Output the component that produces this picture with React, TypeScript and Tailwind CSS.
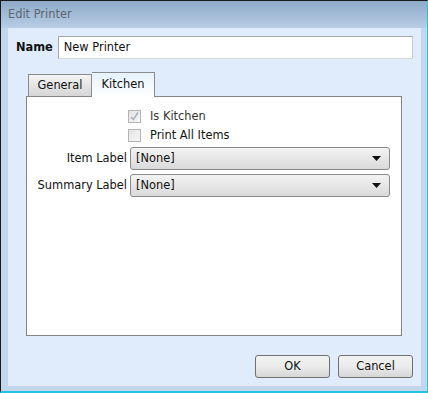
import React from 'react';

const font = { fontFamily: '"DejaVu Sans", Verdana, sans-serif' };

const Check: React.FC<{ checked?: boolean }> = ({ checked }) => (
  <span className="flex h-[13px] w-[13px] items-center justify-center border border-[#b4b4b4] bg-gradient-to-br from-[#e4e4e4] to-[#f6f6f6]">
    {checked && (
      <svg width="11" height="11" viewBox="0 0 11 11">
        <path d="M2 6 L4.3 8.5 L9 1.5" fill="none" stroke="#a8b4c4" strokeWidth="1.6" />
      </svg>
    )}
  </span>
);

const Dropdown: React.FC<{ value: string }> = ({ value }) => (
  <div className="flex h-[23px] flex-1 items-center justify-between rounded-[3px] border border-[#8a8a8a] bg-gradient-to-b from-[#f3f3f3] to-[#dadada] pl-[5px] pr-[8px]">
    <span>{value}</span>
    <svg width="9" height="5" viewBox="0 0 9 5">
      <path d="M0 0 H9 L4.5 5 Z" fill="#111" />
    </svg>
  </div>
);

const Button: React.FC<{ label: string }> = ({ label }) => (
  <button className="h-[23px] w-[75px] rounded-[3px] border border-[#707070] bg-gradient-to-b from-[#f2f2f2] via-[#ebebeb] to-[#d6d6d6] text-[#111]">
    {label}
  </button>
);

export default function App() {
  return (
    <div
      style={font}
      className="flex h-[393px] w-[428px] flex-col border-l border-t border-b-2 border-r border-l-[#1a1a1a] border-t-[#1a1a1a] border-r-[#22c6dc] border-b-[#22c6dc] bg-[#c2d6ee] text-[11.4px] text-[#111]"
    >
      {/* Title bar */}
      <div className="flex h-[27px] shrink-0 items-center bg-gradient-to-b from-[#8eaac8] to-[#b8cde6] pl-[7px] text-[#5d6670]">
        Edit Printer
      </div>

      {/* Frame */}
      <div className="flex flex-1 flex-col pl-[7px] pr-[6px] pb-[5px]">
        <div className="flex flex-1 flex-col bg-[#e0ecfc]">
          {/* Name row */}
          <div className="flex items-center gap-[5px] pl-[8px] pr-[8px] pt-[8px]">
            <span className="font-bold">Name</span>
            <div className="flex h-[23px] flex-1 items-center border border-[#a8a8a8] border-b-[#dcdcdc] border-r-[#c8c8c8] bg-white pl-[5px]">
              New Printer
            </div>
          </div>

          {/* Tabs */}
          <div className="mt-[13px] flex flex-col pl-[18px] pr-[19px]">
            <div className="flex items-end pl-[2px]">
              <div className="flex h-[22px] w-[64px] items-center justify-center border border-b-0 border-[#8c8c8c] bg-gradient-to-b from-[#f4f4f4] to-[#d6d6d6] pt-[1px]">
                General
              </div>
              <div className="relative -mb-px flex h-[25px] w-[63px] items-start justify-center border border-b-0 border-l-0 border-[#8c8c8c] bg-gradient-to-b from-[#e6f2fc] to-white pt-[3px]">
                Kitchen
              </div>
            </div>
            <div className="flex h-[240px] flex-col border border-[#858585] bg-white pt-[11px] pr-[11px]">
              <div className="flex items-center gap-[9px] pl-[101px] leading-[16px] text-[#333]">
                <Check checked />
                <span>Is Kitchen</span>
              </div>
              <div className="mt-[3px] flex items-center gap-[9px] pl-[101px] leading-[16px]">
                <Check />
                <span>Print All Items</span>
              </div>
              <div className="mt-[4px] grid grid-cols-[100px_1fr] items-center gap-x-[3px] gap-y-[4px]">
                <span className="text-right">Item Label</span>
                <Dropdown value="[None]" />
                <span className="text-right">Summary Label</span>
                <Dropdown value="[None]" />
              </div>
            </div>
          </div>

          {/* Buttons */}
          <div className="mt-auto flex justify-end gap-[8px] pb-[8px] pr-[8px]">
            <Button label="OK" />
            <Button label="Cancel" />
          </div>
        </div>
      </div>
    </div>
  );
}
